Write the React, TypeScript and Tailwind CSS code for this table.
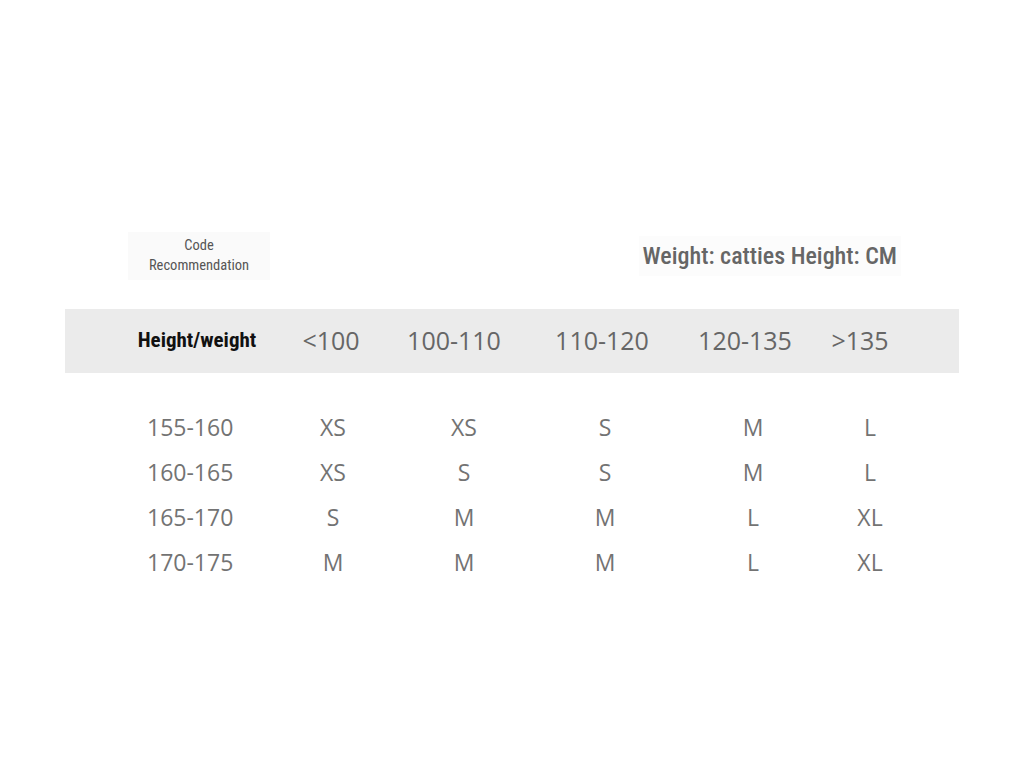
import React from 'react';

const headers = [
  { label: '<100', w: 'w-[134px]' },
  { label: '100-110', w: 'w-[112px]' },
  { label: '110-120', w: 'w-[184px]' },
  { label: '120-135', w: 'w-[102px]' },
  { label: '>135', w: 'w-[128px]' },
];

const rows = [
  ['155-160', 'XS', 'XS', 'S', 'M', 'L'],
  ['160-165', 'XS', 'S', 'S', 'M', 'L'],
  ['165-170', 'S', 'M', 'M', 'L', 'XL'],
  ['170-175', 'M', 'M', 'M', 'L', 'XL'],
];

// data cell widths, chosen so each column sits under its header
const cellW = ['w-[86px]', 'w-[200px]', 'w-[62px]', 'w-[220px]', 'w-[76px]', 'w-[158px]'];

const condensed = "font-['Roboto',sans-serif] font-stretch-condensed";

const App: React.FC = () => {
  return (
    <div className="w-[1024px] h-[768px] bg-white pt-[232px] px-[65px]">
      <div className="flex items-center justify-between">
        <div className={`ml-[63px] w-[142px] h-[48px] bg-[#fafafa] flex flex-col items-center justify-center text-[14.5px] leading-[20px] text-[#555] ${condensed}`}>
          <span>Code</span>
          <span>Recommendation</span>
        </div>
        <div className={`mr-[58px] px-1 bg-[#fcfcfc] text-[24px] leading-[40px] font-medium text-[#666] ${condensed}`}>
          Weight: catties Height: CM
        </div>
      </div>

      <div className="mt-[29px] h-[64px] bg-[#ebebeb] flex items-center pl-[65px]">
        <div className={`w-[134px] text-center text-[21px] font-bold text-[#111] whitespace-nowrap ${condensed}`}>
          Height/weight
        </div>
        {headers.map((h) => (
          <div key={h.label} className={`${h.w} text-center text-[25px] text-[#666] whitespace-nowrap font-['Open_Sans',sans-serif]`}>
            {h.label}
          </div>
        ))}
      </div>

      <div className="mt-[32px] pl-[82px]">
        {rows.map((r) => (
          <div key={r[0]} className="h-[45px] flex items-center">
            {r.map((c, i) => (
              <div key={i} className={`${cellW[i]} text-center text-[23px] text-[#737373] whitespace-nowrap font-['Open_Sans',sans-serif]`}>
                {c}
              </div>
            ))}
          </div>
        ))}
      </div>
    </div>
  );
};

export default App;
